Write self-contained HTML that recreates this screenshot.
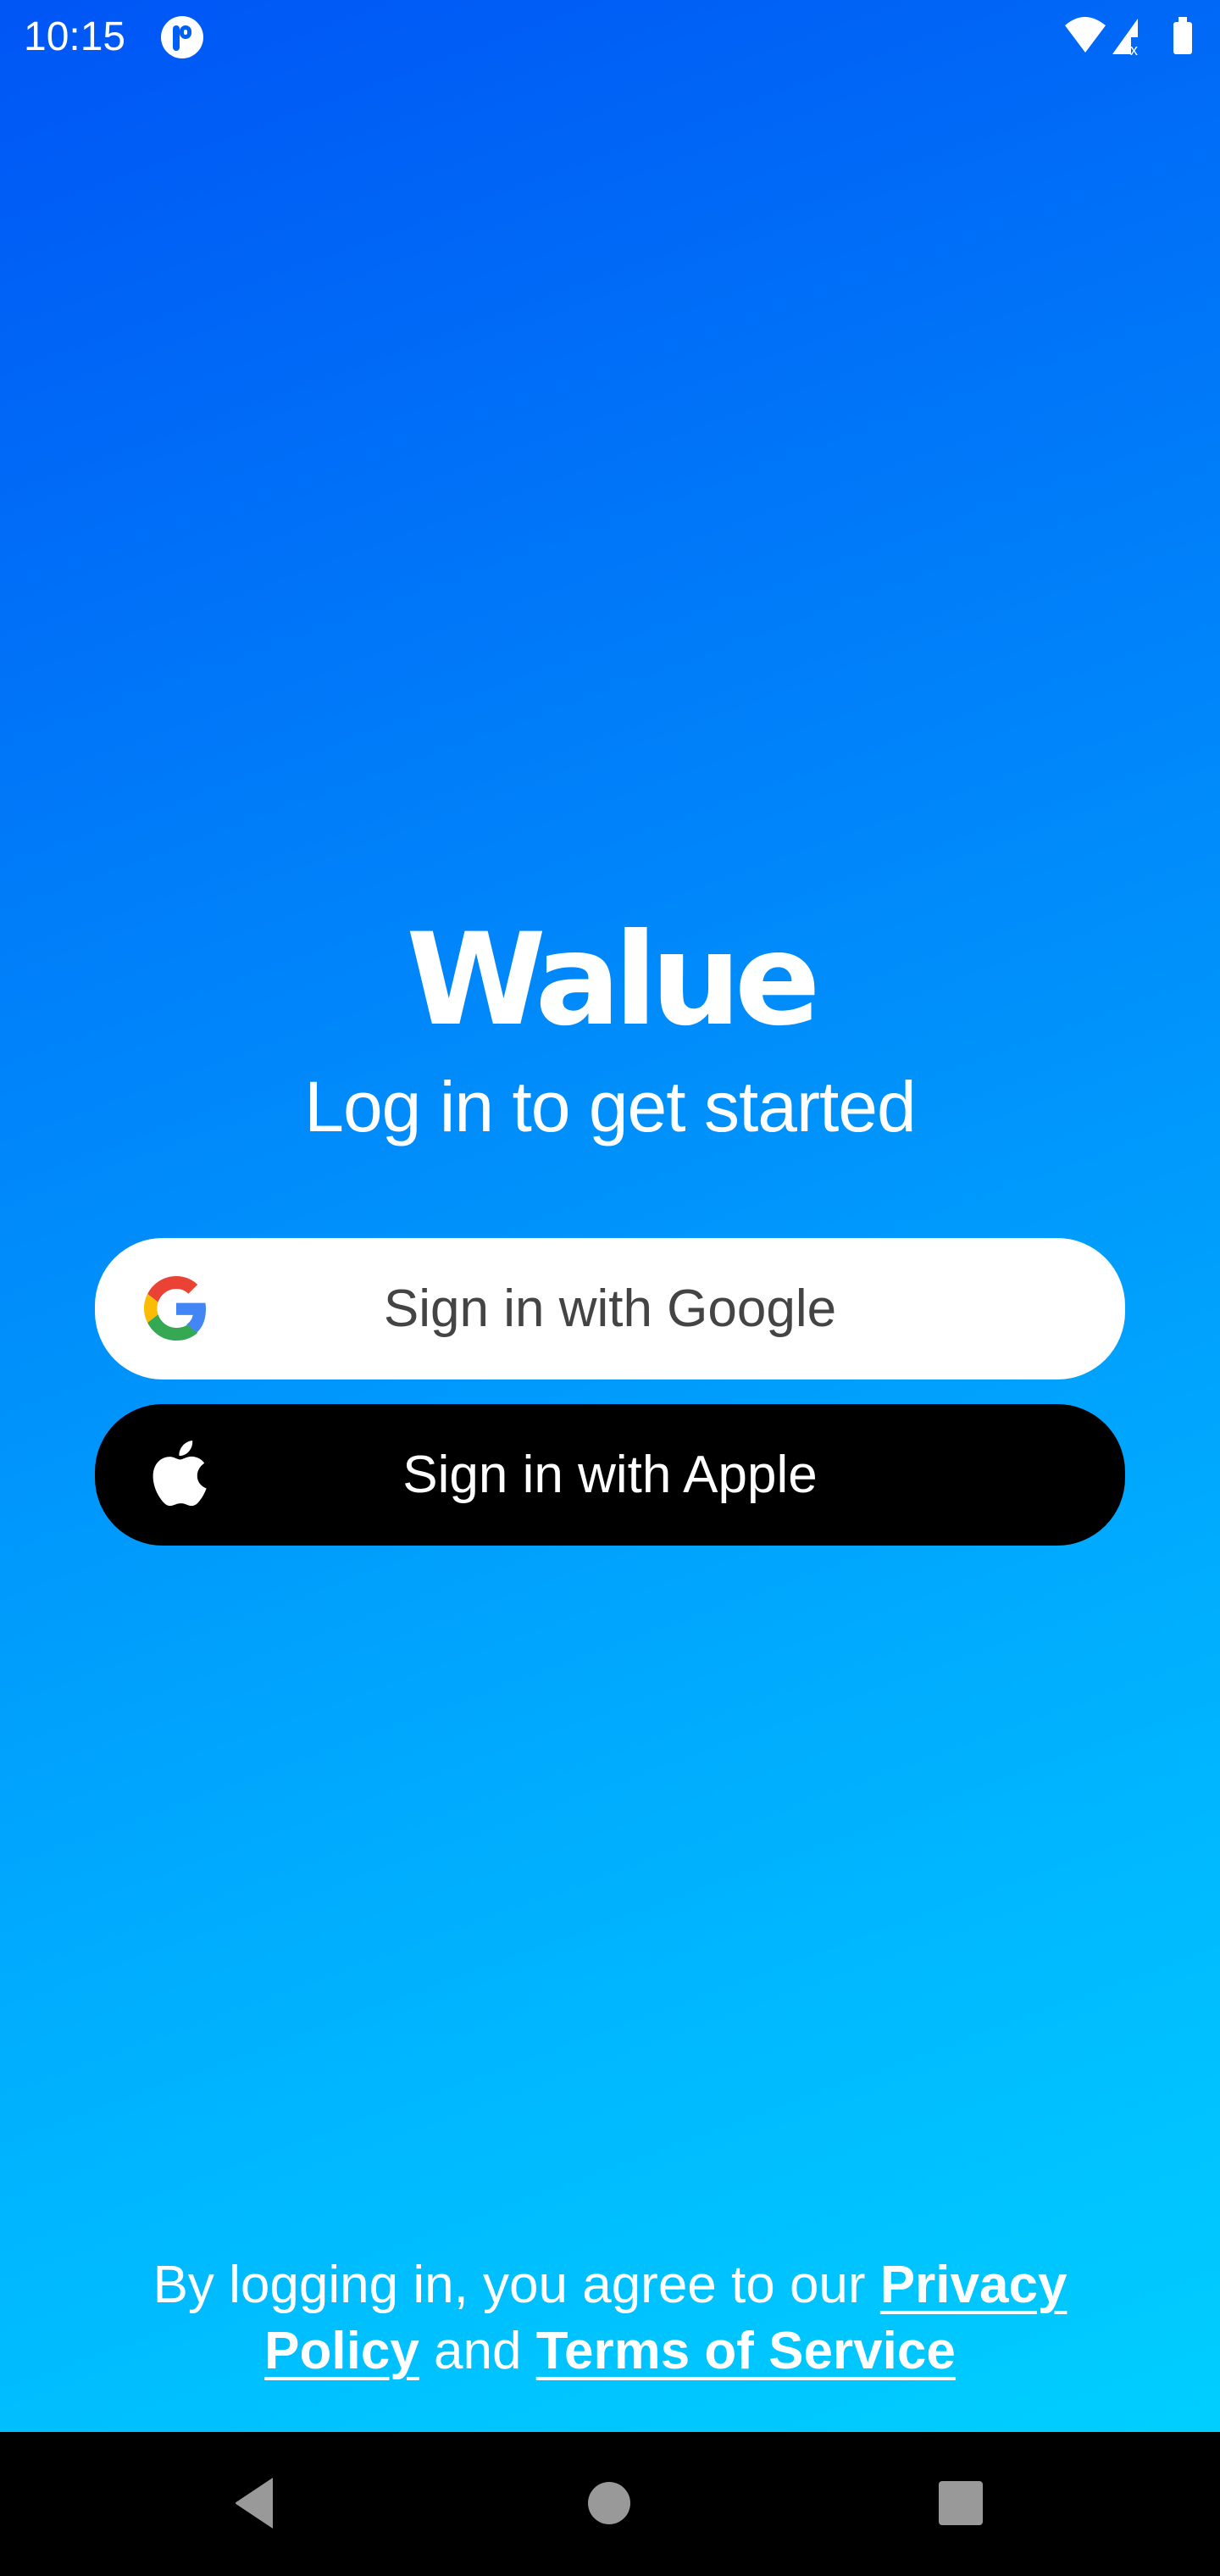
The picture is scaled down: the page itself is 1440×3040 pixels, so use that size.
<!DOCTYPE html>
<html><head><meta charset="utf-8"><style>
*{margin:0;padding:0;box-sizing:border-box}
body{width:1440px;height:3040px;overflow:hidden;font-family:"Liberation Sans",sans-serif;position:relative;
background:linear-gradient(160deg,#0055f5 0%,#0090fb 45%,#00b8ff 75%,#00d4ff 100%);}
.abs{position:absolute}
.time{left:28px;top:16px;color:#fff;font-size:48px}
.logo{left:0;width:1440px;top:1070px;text-align:center;color:#fff;font-weight:bold;font-size:150px;letter-spacing:-8px;font-family:"DejaVu Sans","Liberation Sans",sans-serif}
.sub{left:0;width:1440px;top:1258px;text-align:center;color:#fff;font-size:84px;font-weight:300;letter-spacing:-1px}
.btn{left:112px;width:1216px;height:167px;border-radius:80px;display:flex;align-items:center;justify-content:center;font-size:62px}
.g{top:1461px;background:#fff;color:#444}
.a{top:1657px;background:#000;color:#fff}
.foot{left:170px;width:1100px;top:2658px;text-align:center;color:#fff;font-size:62px;line-height:78px}
.foot b{text-decoration:underline;text-underline-offset:10px;text-decoration-thickness:4px}
.nav{left:0;top:2870px;width:1440px;height:170px;background:#000}
</style></head><body>
<div class="abs time">10:15</div>
<div class="abs" style="left:190px;top:19px;width:50px;height:50px;border-radius:50%;background:#fff"><div style="position:absolute;left:14px;top:11px;width:8px;height:30px;background:#0060f5;border-radius:4px"></div><div style="position:absolute;left:22px;top:11px;width:14px;height:16px;border:5px solid #0060f5;border-radius:8px"></div></div>
<svg class="abs" style="left:1255px;top:18px" width="160" height="48" viewBox="0 0 160 48">
<path d="M2 12 Q25 -8 50 12 L26 44 Z" fill="#fff"/>
<path d="M58 46 L88 4 L88 26 L80 26 L80 46 Z" fill="#fff"/>
<text x="79" y="47" fill="#fff" font-size="18" font-family="Liberation Sans">x</text>
<rect x="130" y="8" width="22" height="38" rx="3" fill="#fff"/><rect x="136" y="2" width="10" height="8" fill="#fff"/>
</svg>
<div class="abs logo">Walue</div>
<div class="abs sub">Log in to get started</div>
<div class="abs btn g"><svg style="position:absolute;left:58px;top:45px" width="76" height="76" viewBox="0 0 48 48">
<path fill="#EA4335" d="M24 9.5c3.5 0 6.6 1.2 9.1 3.6l6.8-6.8C35.8 2.4 30.4 0 24 0 14.6 0 6.6 5.4 2.6 13.3l7.9 6.1C12.4 13.7 17.7 9.5 24 9.5z"/>
<path fill="#4285F4" d="M46.1 24.5c0-1.6-.1-3.1-.4-4.5H24v9h12.4c-.5 2.9-2.2 5.3-4.6 7l7.7 6c4.5-4.2 6.6-10.3 6.6-17.5z"/>
<path fill="#FBBC05" d="M10.5 28.6c-.5-1.4-.8-3-.8-4.6s.3-3.2.8-4.6l-7.9-6.1C.9 16.5 0 20.1 0 24s.9 7.5 2.6 10.7l7.9-6.1z"/>
<path fill="#34A853" d="M24 48c6.5 0 11.9-2.1 15.9-5.8l-7.7-6c-2.2 1.5-5 2.3-8.2 2.3-6.3 0-11.6-4.2-13.5-9.9l-7.9 6.1C6.6 42.6 14.6 48 24 48z"/>
</svg>Sign in with Google</div>
<div class="abs btn a"><svg style="position:absolute;left:62px;top:40px" width="72" height="84" viewBox="0 0 24 28">
<path fill="#fff" d="M19.6 14.9c0-3.3 2.7-4.9 2.8-5-1.5-2.2-3.9-2.5-4.7-2.6-2-.2-3.9 1.200-4.9 1.200-1 0-2.600-1.200-4.200-1.100-2.200 0-4.200 1.300-5.300 3.200-2.300 3.900-.6 9.700 1.600 12.900 1.100 1.600 2.400 3.300 4.100 3.200 1.600-.1 2.300-1 4.200-1 2 0 2.500 1 4.200 1 1.800 0 2.900-1.600 4-3.200 1.200-1.800 1.800-3.600 1.800-3.700-.1 0-3.600-1.300-3.600-4.900zM16.4 5.200c.9-1.100 1.500-2.600 1.300-4.200-1.300.1-2.900.9-3.800 2-.8.9-1.600 2.500-1.400 4 1.500.1 3-.7 3.900-1.800z"/>
</svg>Sign in with Apple</div>
<div class="abs foot">By logging in, you agree to our <b>Privacy Policy</b> and <b>Terms of Service</b></div>
<div class="abs nav">
<svg class="abs" style="left:270px;top:50px" width="900" height="70" viewBox="0 0 900 70">
<path d="M52 4 L52 64 L10 36 Q6 34 10 32 Z" fill="#999"/>
<circle cx="449" cy="34" r="25" fill="#999"/>
<rect x="838" y="8" width="52" height="52" rx="4" fill="#999"/>
</svg></div>
</body></html>
